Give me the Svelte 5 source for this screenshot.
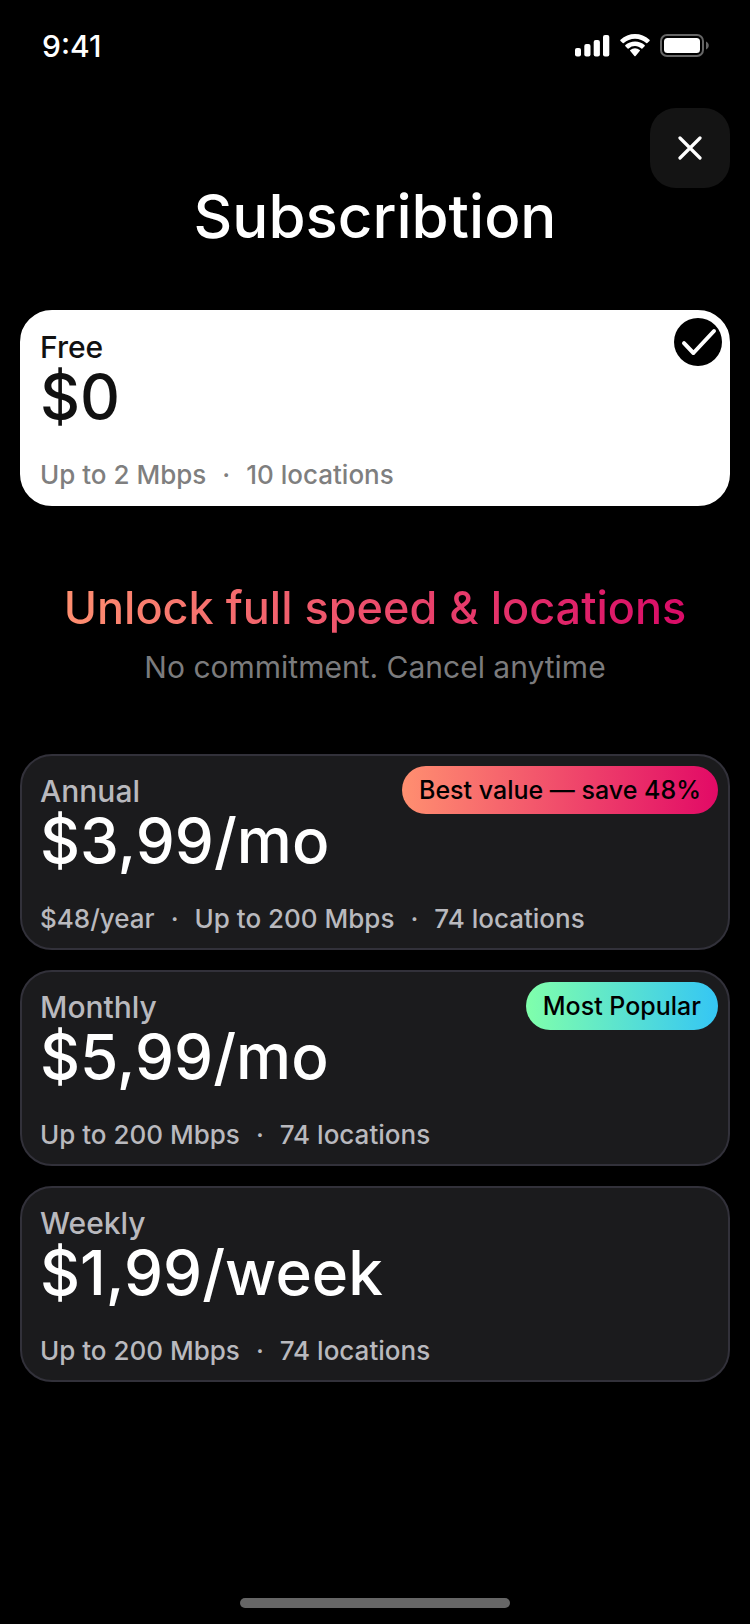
<script lang="ts">
	type Plan = {
		id: string;
		name: string;
		price: string;
		details: string[];
		badge?: string;
		tone?: string;
	};

	const free: Plan = {
		id: 'free',
		name: 'Free',
		price: '$0',
		details: ['Up to 2 Mbps', '10 locations']
	};

	const paid: Plan[] = [
		{
			id: 'annual',
			name: 'Annual',
			price: '$3,99/mo',
			details: ['$48/year', 'Up to 200 Mbps', '74 locations'],
			badge: 'Best value — save 48%',
			tone: 'warm'
		},
		{
			id: 'monthly',
			name: 'Monthly',
			price: '$5,99/mo',
			details: ['Up to 200 Mbps', '74 locations'],
			badge: 'Most Popular',
			tone: 'cool'
		},
		{
			id: 'weekly',
			name: 'Weekly',
			price: '$1,99/week',
			details: ['Up to 200 Mbps', '74 locations']
		}
	];

	let selected = $state('free');
</script>

{#snippet card(plan: Plan)}
	<label class="plan" class:selected={selected === plan.id}>
		<input type="radio" name="plan" value={plan.id} bind:group={selected} />
		<span class="name">{plan.name}</span>
		<span class="price">{plan.price}</span>
		<span class="details">
			{#each plan.details as detail, i}
				{#if i > 0}<span>·</span>{/if}
				<span>{detail}</span>
			{/each}
		</span>
		{#if selected === plan.id}
			<svg class="check" viewBox="0 0 48 48" aria-hidden="true">
				<circle cx="24" cy="24" r="24" fill="#000" />
				<path d="M10 25.2 19.4 35 40 13" fill="none" stroke="#fff" stroke-width="4" stroke-linecap="round" stroke-linejoin="round" />
			</svg>
		{:else if plan.badge}
			<span class="badge {plan.tone}">{plan.badge}</span>
		{/if}
	</label>
{/snippet}

<div class="screen">
	<div class="status">
		<time>9:41</time>
		<div class="indicators" aria-hidden="true">
			<svg width="35" height="24" viewBox="0 0 35 24" fill="#fff">
				<rect x="0" y="14" width="6" height="8.5" rx="2" />
				<rect x="9.3" y="10" width="6.2" height="12.5" rx="2" />
				<rect x="18.7" y="6" width="6.2" height="16.5" rx="2" />
				<rect x="28" y="1" width="6.3" height="21.5" rx="2" />
			</svg>
			<svg width="32" height="24" viewBox="0 0 32 24" fill="#fff">
				<path d="M16 4.7c4.3 0 8.2 1.6 11.2 4.4a.8.8 0 0 0 1.1 0l2.2-2.2a.8.8 0 0 0 0-1.2C26.5 2 21.4 0 16 0S5.5 2 1.5 5.7a.8.8 0 0 0 0 1.2l2.2 2.2a.8.8 0 0 0 1.1 0C7.8 6.3 11.7 4.7 16 4.7z" />
				<path d="M16 12c2.4 0 4.6.9 6.3 2.4a.8.8 0 0 0 1.1 0l2.2-2.2a.8.8 0 0 0 0-1.2A14.2 14.2 0 0 0 16 7.4c-3.6 0-7 1.3-9.6 3.6a.8.8 0 0 0 0 1.2l2.2 2.2a.8.8 0 0 0 1.1 0A9.4 9.4 0 0 1 16 12z" />
				<path d="M20.7 17.1a.8.8 0 0 0 0-1.2 7.2 7.2 0 0 0-9.4 0 .8.8 0 0 0 0 1.2l4.1 4.9a.8.8 0 0 0 1.2 0z" />
			</svg>
			<svg width="50" height="24" viewBox="0 0 50 24">
				<rect x="1" y="1" width="42" height="21" rx="6" fill="none" stroke="#666" stroke-width="2" />
				<rect x="4" y="4" width="36" height="15" rx="3.5" fill="#fff" />
				<path d="M46 7.5c3.7 1.6 3.7 6.4 0 8z" fill="#666" />
			</svg>
		</div>
	</div>

	<header>
		<button class="close" type="button" aria-label="Close">
			<svg width="24" height="24" viewBox="0 0 24 24" fill="none" stroke="#fff" stroke-width="3.2" stroke-linecap="round">
				<path d="M2 2 22 22M22 2 2 22" />
			</svg>
		</button>
		<h1>Subscribtion</h1>
	</header>

	<main>
		{@render card(free)}

		<section class="offer">
			<h2>Unlock full speed &amp; locations</h2>
			<p>No commitment. Cancel anytime</p>
		</section>

		<div class="plans">
			{#each paid as plan (plan.id)}
				{@render card(plan)}
			{/each}
		</div>
	</main>

	<div class="home"></div>
</div>

<style>
	:global(body) {
		background: #000;
	}

	.screen {
		box-sizing: border-box;
		display: flex;
		flex-direction: column;
		min-height: 100vh;
		padding: 0 20px 16px;
		background: #000;
		color: #fff;
		font-family: Inter, 'Liberation Sans', sans-serif;
		font-weight: 500;
	}

	.status {
		display: flex;
		align-items: center;
		justify-content: space-between;
		height: 92px;
		padding: 0 20px 0 22px;
	}

	.status time {
		font-size: 30px;
	}

	.indicators {
		display: flex;
		gap: 9px;
	}

	header {
		display: flex;
		flex-direction: column;
		padding-top: 16px;
	}

	.close {
		display: grid;
		place-items: center;
		align-self: flex-end;
		width: 80px;
		height: 80px;
		padding: 0;
		border: none;
		border-radius: 26px;
		background: #141414;
		cursor: pointer;
	}

	h1 {
		margin: 0;
		font-size: 60px;
		font-weight: 500;
		line-height: 56px;
		text-align: center;
	}

	main {
		padding-top: 66px;
	}

	.plan {
		position: relative;
		box-sizing: border-box;
		display: flex;
		flex-direction: column;
		min-height: 196px;
		padding: 17px 18px 11px;
		border: 2px solid #32313a;
		border-radius: 32px;
		background: #1b1b1d;
		color: #b9b9be;
		cursor: pointer;
	}

	.plan.selected {
		border-color: #fff;
		background: #fff;
		color: #7f7f7f;
	}

	.plan input {
		position: absolute;
		opacity: 0;
		pointer-events: none;
	}

	.name {
		font-size: 30px;
		line-height: 36px;
	}

	.price {
		color: #fff;
		font-size: 62px;
		line-height: 64px;
	}

	.selected .name,
	.selected .price {
		color: #111;
	}

	.details {
		display: flex;
		gap: 16px;
		margin-top: auto;
		font-size: 26px;
		line-height: 36px;
	}

	.check {
		position: absolute;
		top: 6px;
		right: 6px;
		width: 48px;
		height: 48px;
	}

	.badge {
		position: absolute;
		top: 10px;
		right: 10px;
		padding: 0 17px;
		border-radius: 24px;
		color: #000;
		font-size: 25px;
		line-height: 48px;
	}

	.warm {
		background: linear-gradient(90deg, #ff8f70, #e20a66);
	}

	.cool {
		background: linear-gradient(90deg, #80ffab, #35c6f4);
	}

	.offer {
		display: flex;
		flex-direction: column;
		align-items: center;
		padding: 72px 0 62px;
		text-align: center;
	}

	h2 {
		margin: 0;
		background: linear-gradient(90deg, #ff8f70, #d90b67);
		background-clip: text;
		color: transparent;
		font-size: 45px;
		font-weight: 500;
		line-height: 60px;
	}

	.offer p {
		margin: 4px 0 0;
		color: #7b7b7d;
		font-size: 30px;
		font-weight: 400;
		line-height: 50px;
	}

	.plans {
		display: grid;
		gap: 20px;
	}

	.home {
		align-self: center;
		width: 270px;
		height: 10px;
		margin-top: auto;
		border-radius: 5px;
		background: #666;
	}
</style>
